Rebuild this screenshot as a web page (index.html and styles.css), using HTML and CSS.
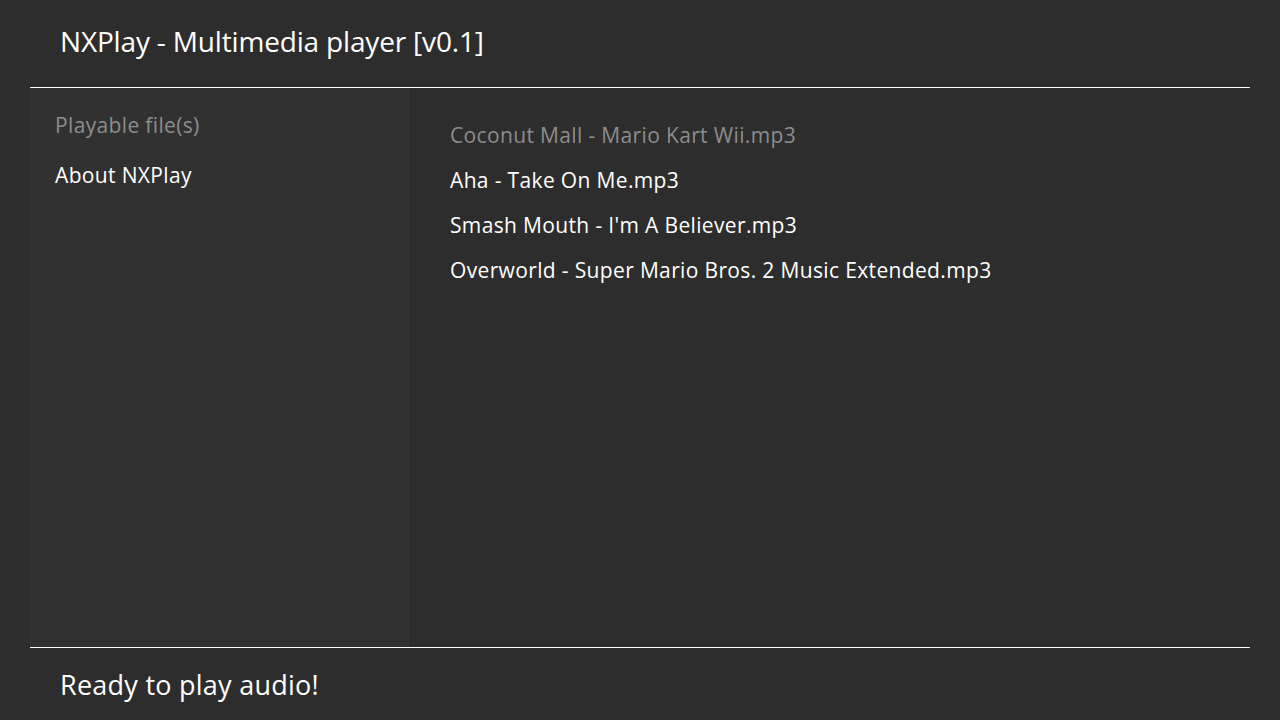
FILE: index.html
```html
<!DOCTYPE html>
<html lang="en">
<head>
    <meta charset="UTF-8">
    <meta name="viewport" content="width=device-width, initial-scale=1.0">
    <title>NXPlay</title>
    <link rel="stylesheet" href="styles.css">
</head>
<body>
    <div class="app">
        <header class="top-bar">
            <h1 class="title">NXPlay - Multimedia player [v0.1]</h1>
        </header>

        <div class="content">
            <nav class="sidebar">
                <div class="side-item dim">Playable file(s)</div>
                <div class="side-item">About NXPlay</div>
            </nav>

            <ul class="file-list">
                <li class="file dim">Coconut Mall - Mario Kart Wii.mp3</li>
                <li class="file">Aha - Take On Me.mp3</li>
                <li class="file">Smash Mouth - I'm A Believer.mp3</li>
                <li class="file">Overworld - Super Mario Bros. 2 Music Extended.mp3</li>
            </ul>
        </div>

        <footer class="bottom-bar">
            <span class="status">Ready to play audio!</span>
        </footer>
    </div>
</body>
</html>
```

FILE: styles.css
```css
/* General styling */
body {
    margin: 0;
    background-color: #2d2d2d;
    color: #fff;
    font-family: "Open Sans", "Noto Sans", sans-serif;
}

.app {
    display: flex;
    flex-direction: column;
    width: 1280px;
    height: 720px;
}

/* Title bar */
.top-bar {
    height: 81px;
    padding: 0 0 6px 30px;
    margin: 0 30px;
    border-bottom: 1px solid #fff;
    display: flex;
    align-items: center;
}

.title {
    margin: 0;
    font-size: 28px;
    font-weight: normal;
    letter-spacing: -0.17px;
}

/* Middle area */
.content {
    flex: 1;
    display: flex;
    margin: 0 30px;
}

.sidebar {
    width: 380px;
    background-color: #313131;
    border-right: 1px solid #2a2a2a;
    padding-top: 25px;
}

.side-item {
    padding-left: 25px;
    height: 50px;
    line-height: 25px;
    font-size: 21px;
    letter-spacing: 0.35px;
}

.file-list {
    list-style: none;
    margin: 0;
    padding: 29px 0 0 39px;
}

.file {
    height: 45px;
    line-height: 36px;
    font-size: 21px;
    letter-spacing: 0.35px;
}

.dim {
    color: #8c8c8c;
}

/* Status bar */
.bottom-bar {
    height: 72px;
    margin: 0 30px;
    border-top: 1px solid #fff;
    display: flex;
    align-items: center;
    padding-left: 30px;
}

.status {
    font-size: 27px;
    letter-spacing: 0.25px;
}
```
